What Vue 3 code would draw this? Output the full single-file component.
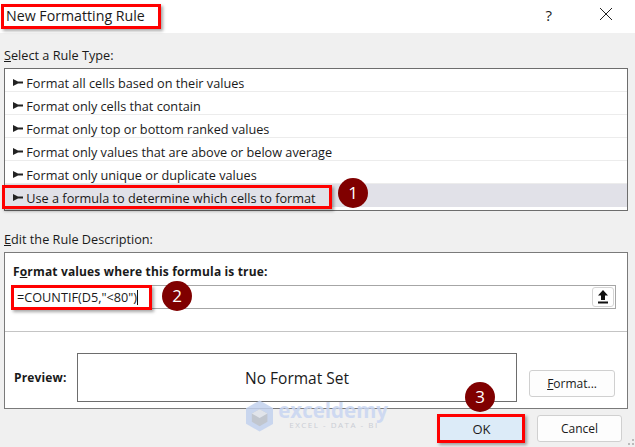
<template>
    <div class="dialog">
        <header class="title-bar">
            <span class="title">New Formatting Rule</span>
            <span class="help">?</span>
            <svg class="close" width="14" height="14" viewBox="0 0 14 14">
                <path d="M1 1L13 13M13 1L1 13" stroke="#222" stroke-width="1" fill="none" />
            </svg>
        </header>

        <main class="content">
            <div class="group-label"><u>S</u>elect a Rule Type:</div>
            <ul class="rule-list">
                <li
                    v-for="(rule, index) in rules"
                    :key="index"
                    :class="{ 'is-selected': index === selectedIndex }"
                >
                    <svg class="arrow" width="10" height="7" viewBox="0 0 10 7">
                        <path d="M0 0L5 2.500H10V4.500H5L0 7Z" fill="#222" />
                    </svg>
                    {{ rule }}
                </li>
            </ul>

            <div class="group-label second"><u>E</u>dit the Rule Description:</div>
            <section class="description">
                <div class="formula-part">
                    <div class="bold-label">F<u>o</u>rmat values where this formula is true:</div>
                    <div class="formula-input">
                        <span class="formula-text">=COUNTIF(D5,"&lt;80")</span><span class="caret"></span>
                        <span class="ref-button">
                            <svg width="12" height="14" viewBox="0 0 12 14">
                                <path d="M6 0L11 5.500H8V10H4V5.500H1Z" fill="#111" />
                                <rect x="1" y="11.500" width="10" height="2" fill="#111" />
                            </svg>
                        </span>
                    </div>
                </div>
                <div class="preview-part">
                    <div class="bold-label preview-label">Preview:</div>
                    <div class="preview-box">No Format Set</div>
                    <button class="btn format-btn"><u>F</u>ormat...</button>
                </div>
            </section>

            <div class="actions">
                <button class="btn ok-btn">OK</button>
                <button class="btn cancel-btn">Cancel</button>
            </div>
        </main>

        <!-- tutorial annotations on top of the dialog -->
        <div class="mark mark-title"></div>
        <div class="mark mark-rule"></div>
        <div class="mark mark-formula"></div>
        <div class="mark mark-ok"></div>
        <div class="step step-1">1</div>
        <div class="step step-2">2</div>
        <div class="step step-3">3</div>

        <div class="watermark">
            <svg width="28" height="32" viewBox="0 0 28 32">
                <path d="M14 0L28 8V24L14 32L0 24V8Z" fill="#c3d2ee" />
                <path d="M14 9L22 13.500V22L14 26.500L6 22V13.500Z" fill="#b9bfc9" />
                <path d="M14 9L22 13.500L14 18L6 13.500Z" fill="#dfe3ea" />
            </svg>
            <div class="wm-text">
                <div class="wm-name">exceldemy</div>
                <div class="wm-sub">EXCEL - DATA - BI</div>
            </div>
        </div>

        <svg class="grip" width="8" height="8" viewBox="0 0 8 8">
            <rect x="5" y="0" width="2" height="2" fill="#bbb" />
            <rect x="1" y="4" width="2" height="2" fill="#bbb" />
            <rect x="5" y="4" width="2" height="2" fill="#bbb" />
        </svg>
    </div>
</template>

<script setup>
import { ref } from 'vue';

const rules = [
    'Format all cells based on their values',
    'Format only cells that contain',
    'Format only top or bottom ranked values',
    'Format only values that are above or below average',
    'Format only unique or duplicate values',
    'Use a formula to determine which cells to format',
];

const selectedIndex = ref(5);
</script>

<style>
html, body {
    margin: 0;
    background: #f0f0f0;
}
</style>

<style scoped>
.dialog {
    position: relative;
    width: 635px;
    height: 447px;
    overflow: hidden;
    background: #f0f0f0;
    color: #1a1a1a;
    font-family: "Open Sans", "Noto Sans", sans-serif;
    font-size: 12.7px;
}

.title-bar {
    display: flex;
    align-items: center;
    height: 33px;
    background: #fff;
    padding: 0 22px 0 6px;
    box-sizing: border-box;
}

.title {
    flex: 1;
    font-size: 14.2px;
    padding-bottom: 3px;
}

.help {
    font-size: 15px;
    margin-right: 47px;
    padding-bottom: 4px;
}

.close {
    margin-bottom: 5px;
}

.content {
    padding: 0 7px 0 4px;
}

.group-label {
    height: 35px;
    line-height: 45px;
}

.group-label.second {
    height: 41px;
    line-height: 57px;
}

.rule-list {
    list-style: none;
    margin: 0;
    padding: 0 0 2px;
    background: #fff;
    border: 1.5px solid #6d6d6d;
    border-bottom-width: 1px;
    box-sizing: border-box;
    height: 143px;
}

.rule-list li {
    height: 23px;
    box-sizing: border-box;
    border-bottom: 1px solid #ececec;
    padding: 5px 0 0 8px;
    line-height: 18px;
    display: flex;
    align-items: center;
    white-space: pre;
}

.rule-list li.is-selected {
    background: #e1e1e8;
    border-bottom: none;
}

.arrow {
    margin-right: 0;
    margin-top: -1px;
}

.description {
    background: #fff;
    border: 1px solid #7a7a7a;
    height: 157px;
    box-sizing: border-box;
}

.formula-part {
    height: 79px;
    border-bottom: 1px solid #c4c4c4;
    padding: 10px 11px 0 8px;
    box-sizing: border-box;
}

.bold-label {
    font-size: 12px;
    letter-spacing: 0.15px;
    font-weight: 700;
    line-height: 17px;
}

.formula-input {
    display: flex;
    align-items: center;
    height: 24px;
    margin-top: 5px;
    padding-left: 3px;
    border: 1px solid #a6a6a6;
    box-sizing: border-box;
}

.caret {
    width: 1px;
    height: 15px;
    background: #111;
}

.ref-button {
    margin-left: auto;
    margin-right: 1px;
    width: 22px;
    height: 20px;
    display: flex;
    align-items: center;
    justify-content: center;
    border: 1px solid #d4d4d4;
    border-radius: 3px;
    box-sizing: border-box;
}

.preview-part {
    display: flex;
    align-items: center;
    padding: 21px 12px 0 9px;
}

.preview-label {
    width: 63px;
}

.preview-box {
    width: 441px;
    height: 49px;
    display: flex;
    align-items: center;
    justify-content: center;
    border: 1px solid #6d6d6d;
    box-sizing: border-box;
    font-size: 15.5px;
}

.btn {
    font-family: inherit;
    font-size: 12px;
    color: #1a1a1a;
    background: #fdfdfd;
    border: 1px solid #d0d0d0;
    border-radius: 3px;
    padding: 0;
    box-sizing: border-box;
}

.format-btn {
    width: 86px;
    height: 27px;
    margin-left: 12px;
    margin-top: 11px;
}

.actions {
    display: flex;
    justify-content: flex-end;
    gap: 13px;
    margin-top: 6px;
    padding-right: 6px;
}

.ok-btn {
    width: 85px;
    height: 27px;
    background: #dcebf8;
    font-size: 13px;
}

.cancel-btn {
    width: 85px;
    height: 27px;
}

.mark {
    position: absolute;
    border: 3px solid #f00;
    box-sizing: border-box;
    box-shadow: 2px 2px 3px rgba(0, 0, 0, 0.35);
}

.mark-title {
    left: 1px;
    top: 4px;
    width: 160px;
    height: 25px;
}

.mark-rule {
    left: 2px;
    top: 185px;
    width: 330px;
    height: 24px;
}

.mark-formula {
    left: 11px;
    top: 285px;
    width: 141px;
    height: 25px;
}

.mark-ok {
    left: 437px;
    top: 414px;
    width: 88px;
    height: 29px;
}

.step {
    position: absolute;
    width: 30px;
    height: 30px;
    border-radius: 50%;
    background: #800000;
    color: #fff;
    font-size: 17px;
    line-height: 29px;
    text-align: center;
}

.step-1 {
    left: 338px;
    top: 178px;
}

.step-2 {
    left: 162px;
    top: 281px;
}

.step-3 {
    left: 465px;
    top: 382px;
}

.watermark {
    position: absolute;
    left: 246px;
    top: 400px;
    width: 142px;
    height: 32px;
    display: flex;
    gap: 5px;
    opacity: 0.85;
}

.wm-name {
    font-size: 20.5px;
    font-weight: 700;
    line-height: 20px;
    color: #c9d6f2;
}

.wm-sub {
    font-size: 8px;
    line-height: 10px;
    letter-spacing: 1.5px;
    color: #c4c8d0;
    padding-left: 11px;
}

.grip {
    position: absolute;
    right: 0;
    bottom: 0;
}
</style>
